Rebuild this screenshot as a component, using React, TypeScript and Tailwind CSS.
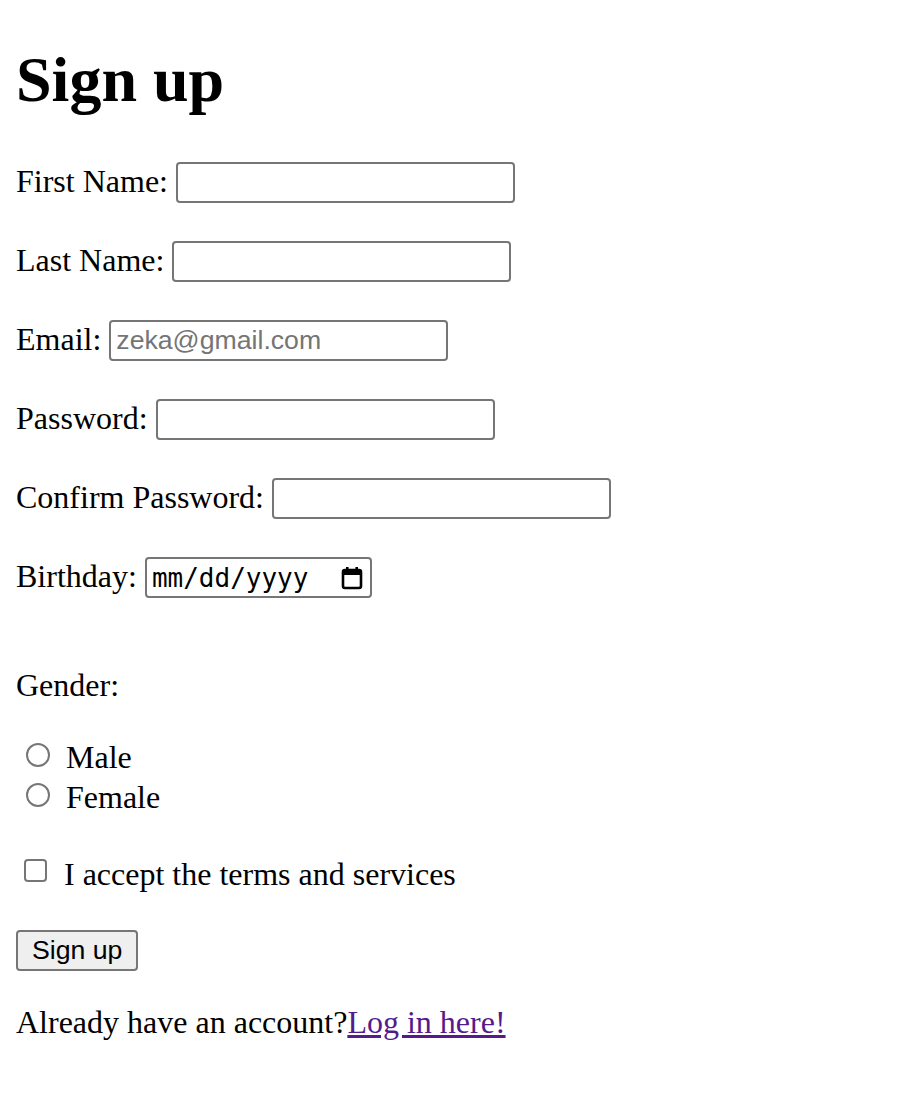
import React from "react";

function Field({
  label,
  type = "text",
  placeholder,
  first = false,
}: {
  label: string;
  type?: string;
  placeholder?: string;
  first?: boolean;
}) {
  return (
    <div className={`flex items-start h-[41px] mb-[38px] ${first ? "mt-[45px]" : ""}`}>
      <span className="mt-[1px] leading-[36px] whitespace-nowrap">{label}</span>
      <input
        type={type}
        placeholder={placeholder}
        className="ml-[8px] w-[339px] h-[41px] border-2 border-[#767676] rounded-[4px] px-[5px] bg-white font-['Liberation_Sans',Arial,sans-serif] text-[26.67px] leading-[normal] text-black placeholder:text-[#757575] outline-none"
      />
    </div>
  );
}

function CalendarIcon() {
  return (
    <svg width="22" height="24" viewBox="0 0 22 24" aria-hidden="true">
      <rect x="2" y="4" width="18" height="18" rx="2" fill="none" stroke="#000" strokeWidth="2.6" />
      <rect x="2" y="4" width="18" height="5" fill="#000" />
      <rect x="5" y="1" width="2.6" height="5" fill="#000" />
      <rect x="14.4" y="1" width="2.6" height="5" fill="#000" />
    </svg>
  );
}

export default function App() {
  return (
    <div className="min-h-[1104px] bg-white px-4 pb-16 font-['Liberation_Serif','Times_New_Roman',serif] text-[32px] leading-[36px] text-black">
      <h1 className="pt-[43px] text-[64px] font-bold leading-[74px]">Sign up</h1>

      <Field label="First Name:" first />
      <Field label="Last Name:" />
      <Field label="Email:" type="email" placeholder="zeka@gmail.com" />
      <Field label="Password:" type="password" />
      <Field label="Confirm Password:" type="password" />

      <div className="flex items-start h-[41px]">
        <span className="mt-[1px] leading-[36px] whitespace-nowrap">Birthday:</span>
        <div className="ml-[8px] w-[227px] h-[41px] border-2 border-[#767676] rounded-[4px] pl-[5px] pr-[7px] bg-white flex items-center justify-between">
          <span className="font-['DejaVu_Sans_Mono',monospace] text-[26px] leading-none text-black">mm/dd/yyyy</span>
          <CalendarIcon />
        </div>
      </div>

      <div className="mt-[69px] leading-[36px]">Gender:</div>

      <div className="mt-[34px]">
        <label className="flex items-start h-[40px]">
          <span className="ml-[10px] mt-[6px] w-[24px] h-[24px] rounded-full border-2 border-[#767676] bg-white shrink-0" />
          <span className="ml-[16px] mt-[2px] leading-[36px]">Male</span>
        </label>
        <label className="flex items-start h-[40px]">
          <span className="ml-[10px] mt-[6px] w-[24px] h-[24px] rounded-full border-2 border-[#767676] bg-white shrink-0" />
          <span className="ml-[16px] mt-[2px] leading-[36px]">Female</span>
        </label>
      </div>

      <label className="mt-[37px] flex items-start h-[40px]">
        <span className="ml-[8px] mt-[5px] w-[23px] h-[23px] rounded-[4px] border-2 border-[#767676] bg-white shrink-0" />
        <span className="ml-[17px] mt-[2px] leading-[36px]">I accept the terms and services</span>
      </label>

      <button
        type="button"
        className="mt-[36px] block h-[41px] px-[14px] border-2 border-[#767676] rounded-[4px] bg-[#efefef] font-['Liberation_Sans',Arial,sans-serif] text-[26.67px] leading-none text-black"
      >
        Sign up
      </button>

      <p className="mt-[33px] leading-[36px]">
        Already have an account?
        <a href="#" className="text-[#551a8b] underline">
          Log in here!
        </a>
      </p>
    </div>
  );
}
